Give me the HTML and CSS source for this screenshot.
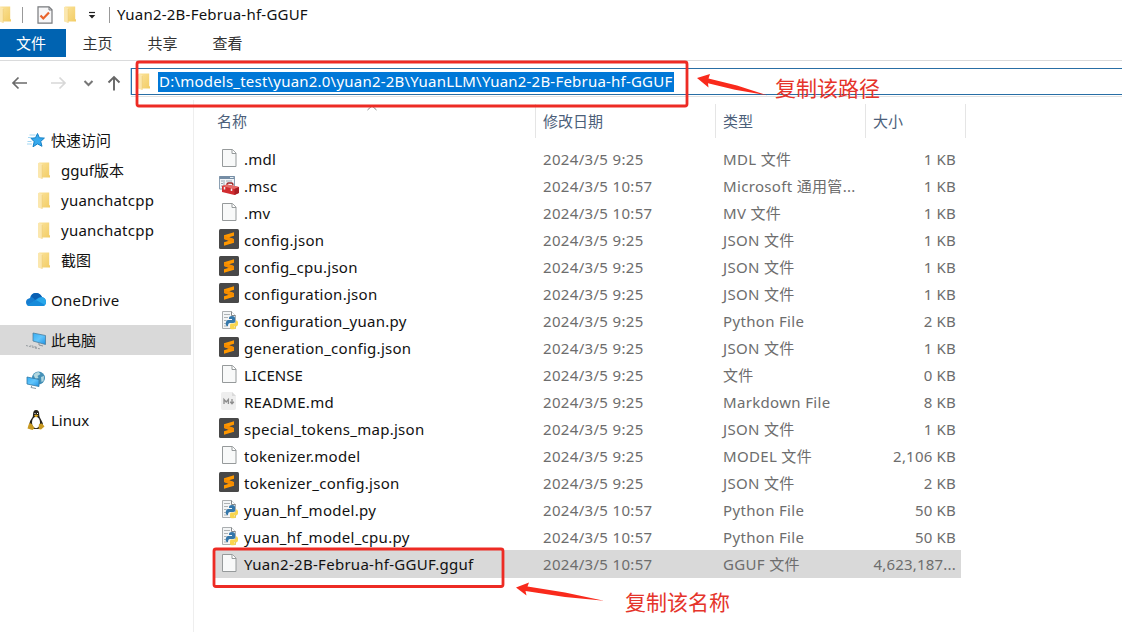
FILE: index.html
```html
<!DOCTYPE html>
<html lang="zh-CN">
<head>
<meta charset="utf-8">
<title>Yuan2-2B-Februa-hf-GGUF</title>
<link rel="stylesheet" href="styles.css">
</head>
<body>
<svg class="defs" width="0" height="0">
  <defs>
    <linearGradient id="gold" x1="0" y1="0" x2="1" y2="1"><stop offset="0" stop-color="#fbe39b"/><stop offset="1" stop-color="#f2cc64"/></linearGradient>
    <linearGradient id="screen" x1="0" y1="0" x2="1" y2="1"><stop offset="0" stop-color="#35aef5"/><stop offset=".5" stop-color="#62c5fb"/><stop offset="1" stop-color="#1d91e4"/></linearGradient>
    <symbol id="folder" viewBox="0 0 12 17"><path d="M1 .5h10.2v12.8h.8v2.2H4z" fill="url(#gold)"/><path d="M0 .8 4.2 2v15L0 15.5z" fill="#fbe7ae"/><path d="M4.2 3v14" stroke="#e9c566" stroke-width=".5"/></symbol>
    <symbol id="page" viewBox="0 0 20 20"><path d="M3.500 1.500h10l3.500 3.500v13.500H3.500z" fill="#f8f9f9" stroke="#969a9b"/><path d="M13 1.500v4h4" fill="#fff" stroke="#969a9b"/></symbol>
    <symbol id="sublime" viewBox="0 0 20 20"><rect width="20" height="20" rx="1.500" fill="#484848"/><path d="M5 6.200 15 3.200v3.500L10 8.300 15 10v3.700L5 16.700v-3.500l5-1.500L5 10z" fill="#ff9800"/><path d="M5 6.500v3.500l10 3.700v-3.500z" fill="#f58c00"/></symbol>
    <symbol id="python" viewBox="0 0 20 20"><path d="M3.500 1.500h9l4 4v13h-13z" fill="#f3f5f6" stroke="#aaaeb0"/><path d="M12.500 1.500v4h4" fill="#fff" stroke="#85898b"/><path d="M5 4.500h6M5 7.500h4M5 10.500h2.500M5 13.500h2M5 16h4" stroke="#9ca2a5" stroke-width=".8"/><path d="M10 8q0-2 3-2t3 2v4q0 1-2 1h-3q-2 0-2 3H8q-2-1-1-4 .5-2 2-2h4V9h-3z" fill="#3477aa"/><path d="M12 13.500h3q2 0 2-3h1q1.500 1 1 4-.5 2-2 2h-2v.7h2v1q0 1-3 1t-3-1.500v-2q0-2.200 1-2.200z" fill="#f9d64e"/></symbol>
    <symbol id="markdown" viewBox="0 0 20 20"><path d="M4 1h9l4 4v12q0 2-2 2H4q-2 0-2-2V3q0-2 2-2z" fill="#eee"/><path d="M13 1v4h4z" fill="#dadada"/><path d="M5 13V8.500l2.200 2.500 2.200-2.500V13M13 8v4M11.200 10.800 13 12.800l1.800-2" fill="none" stroke="#8d8d8d" stroke-width="1.300"/></symbol>
    <symbol id="toolbox" viewBox="0 0 20 20"><path d="M.5 1.500h15V14H.5z" fill="#f2f5f8" stroke="#8ca0b2"/><path d="M.500 1h15v3H.5z" fill="#758da5"/><path d="M11 2.500h3.500" stroke="#e8f0f5"/><path d="M5 5v8M2 6h2M2 8.500h2M2 11h2M7 6h6" stroke="#8795a2" stroke-width=".8"/><path d="M8 11V9q0-1 1.500-1h3q1.500 0 1.500 2.500" fill="none" stroke="#972323" stroke-width="1.300"/><path d="m3 11 5-1.500 12 2.500-.5 6-4 2L3 17z" fill="#d12c30"/><path d="m3 11 5-1.500 12 2.500-4.500 2z" fill="#e66c69"/><path d="m15.500 14 4.500-2v6l-4.500 2z" fill="#a91e24"/><path d="M5.500 12v2.500M12.500 13.500V16" stroke="#eee" stroke-width="1.500"/></symbol>
  </defs>
</svg>
<div class="window">
  <header class="titlebar">
    <svg class="fold first"><use href="#folder"/></svg><i class="bar"></i>
    <svg class="check" viewBox="0 0 16 18"><path d="M1 .8h11l3 3v13.400H1z" fill="#f7f7f8" stroke="#77797c" stroke-width="1.200"/><path d="M12 1v3h3" fill="none" stroke="#77797c"/><path d="m3.500 9.500 2.800 3L12 6.500" fill="none" stroke="#e9642c" stroke-width="2.200"/></svg>
    <svg class="fold"><use href="#folder"/></svg>
    <svg class="customize" viewBox="0 0 8 8"><path d="M1 1.500h6" stroke="#222" stroke-width="1.200"/><path d="M.7 4h6.600L4 7.500z" fill="#222"/></svg>
    <i class="bar last"></i><span class="title">Yuan2-2B-Februa-hf-GGUF</span>
  </header>
  <nav class="tabs"><span class="tab active">文件</span><span class="tab">主页</span><span class="tab">共享</span><span class="tab">查看</span></nav>
  <div class="address-row">
    <svg class="nav-icons" width="131" height="39" viewBox="0 0 131 39" fill="none" stroke-width="1.700">
      <path d="M27 22H13M18.500 16.500 13 22l5.500 5.500" stroke="#6b6b6b"/><path d="M51 22h14M59.500 16.500 65 22l-5.500 5.500" stroke="#d8d8d8"/><path d="m84.500 20 4 4 4-4" stroke="#777" stroke-width="2"/><path d="M114 29.500V16M108.500 21.500 114 16l5.500 5.500" stroke="#666" stroke-width="1.900"/>
    </svg>
    <div class="address"><svg class="fold"><use href="#folder"/></svg><span class="path">D:\models_test\yuan2.0\yuan2-2B\YuanLLM\Yuan2-2B-Februa-hf-GGUF</span></div>
  </div>
  <div class="content">
    <aside class="sidebar">
      <div class="side cjk"><svg class="side-icon" viewBox="0 0 20 20"><path d="m11.500 3.500 1.900 4.300 5 .3-3.700 3.300 1.300 4.900-4.500-2.400-4.500 2.900 1.200-5.100L5 8.300l4.500-.5z" fill="#36a9ed" stroke="#1681c6"/><path d="M3.500 5h6M2 7.500h4.500M1.500 11.500h4M1 14h5" stroke="#8bcdf0" stroke-width=".8"/></svg><span>快速访问</span></div>
      <div class="side child cjk"><svg class="fold"><use href="#folder"/></svg><span>gguf版本</span></div>
      <div class="side child"><svg class="fold"><use href="#folder"/></svg><span>yuanchatcpp</span></div>
      <div class="side child"><svg class="fold"><use href="#folder"/></svg><span>yuanchatcpp</span></div>
      <div class="side child cjk"><svg class="fold"><use href="#folder"/></svg><span>截图</span></div>
      <div class="side group"><svg class="side-icon" viewBox="0 0 20 20"><path d="M4 16q-4 0-4-4 0-3 4-4 1-5 6-5 4 0 6 4 4 1 4 5 0 4-4 4z" fill="#167dd0"/><path d="M5 7q1-4 5-4 4 0 6 4-4 0-7 3Q7 7 5 7z" fill="#0b60b2"/><path d="M2 15q4-2 8-5 3-3 6-3 4 1 4 5 0 4-4 4H4z" fill="#29a7ea"/><path d="m10 10 9 5q-1 1-3 1H4q-2 0-3-1z" fill="#168bda"/></svg><span>OneDrive</span></div>
      <div class="side group selected cjk"><svg class="side-icon" viewBox="0 0 20 20"><path d="m7 3 12.500 2.500v9L7 11z" fill="url(#screen)" stroke="#4b7d9e" stroke-width=".8"/><path d="m13 13 0 2 4 1" stroke="#8b9299" fill="none"/><path d="m0 15.500 9 2.300 2-.5-7-2M9 18l5 .8" stroke="#979da1" stroke-dasharray="2 1" fill="none"/></svg><span>此电脑</span></div>
      <div class="side group cjk"><svg class="side-icon" viewBox="0 0 20 20"><circle cx="12.500" cy="8" r="6.500" fill="#438fb6"/><path d="M7.500 5q2-3 5-3l2 2-3 2 1 2-3 1zM15 7l3-1-.5 5-2 1z" fill="#b2d7df"/><path d="m1 7 12 2.500v7L1 14z" fill="url(#screen)" stroke="#3179a4" stroke-width=".8"/><path d="m6 15.500-1 2 5 1" stroke="#879aa6" fill="none"/></svg><span>网络</span></div>
      <div class="side group"><svg class="side-icon" viewBox="0 0 20 20"><path d="M7 5q0-5 3-5 3.500 0 3.200 5 0 2 2 5 2 3 2 6l-3 3H7l-4-4q1-5 3-7 1-1 1-3z" fill="#25221c"/><ellipse cx="10" cy="12.500" rx="4" ry="5.800" fill="#fff"/><path d="M8 5.500 10 4.500l2.500 1-2.500 2z" fill="#dca91f"/><path d="M9 3v1M11.500 3v1" stroke="#fff"/><path d="m3.500 13 2 .7 3 4.300-2 2-5-1.500L2.500 15zM16 13.500l2.500 3-3.500 3-2.500-.5.500-5z" fill="#c99a22"/></svg><span class="plain">Linux</span></div>
    </aside>
    <main class="files">
      <div class="columns"><span class="sorted">名称<svg viewBox="0 0 10 6"><path d="M.5 5 5 .8 9.500 5" fill="none" stroke="#777" stroke-width=".9"/></svg></span><span>修改日期</span><span>类型</span><span>大小</span></div>
      <div class="row"><span class="name"><svg><use href="#page"/></svg>.mdl</span><span>2024/3/5 9:25</span><span>MDL 文件</span><span class="size">1 KB</span></div>
      <div class="row"><span class="name"><svg><use href="#toolbox"/></svg>.msc</span><span>2024/3/5 10:57</span><span>Microsoft 通用管...</span><span class="size">1 KB</span></div>
      <div class="row"><span class="name"><svg><use href="#page"/></svg>.mv</span><span>2024/3/5 10:57</span><span>MV 文件</span><span class="size">1 KB</span></div>
      <div class="row"><span class="name"><svg><use href="#sublime"/></svg>config.json</span><span>2024/3/5 9:25</span><span>JSON 文件</span><span class="size">1 KB</span></div>
      <div class="row"><span class="name"><svg><use href="#sublime"/></svg>config_cpu.json</span><span>2024/3/5 9:25</span><span>JSON 文件</span><span class="size">1 KB</span></div>
      <div class="row"><span class="name"><svg><use href="#sublime"/></svg>configuration.json</span><span>2024/3/5 9:25</span><span>JSON 文件</span><span class="size">1 KB</span></div>
      <div class="row"><span class="name"><svg><use href="#python"/></svg>configuration_yuan.py</span><span>2024/3/5 9:25</span><span>Python File</span><span class="size">2 KB</span></div>
      <div class="row"><span class="name"><svg><use href="#sublime"/></svg>generation_config.json</span><span>2024/3/5 9:25</span><span>JSON 文件</span><span class="size">1 KB</span></div>
      <div class="row"><span class="name plain"><svg><use href="#page"/></svg>LICENSE</span><span>2024/3/5 9:25</span><span>文件</span><span class="size">0 KB</span></div>
      <div class="row"><span class="name"><svg><use href="#markdown"/></svg>README.md</span><span>2024/3/5 9:25</span><span>Markdown File</span><span class="size">8 KB</span></div>
      <div class="row"><span class="name"><svg><use href="#sublime"/></svg>special_tokens_map.json</span><span>2024/3/5 9:25</span><span>JSON 文件</span><span class="size">1 KB</span></div>
      <div class="row"><span class="name"><svg><use href="#page"/></svg>tokenizer.model</span><span>2024/3/5 9:25</span><span>MODEL 文件</span><span class="size">2,106 KB</span></div>
      <div class="row"><span class="name"><svg><use href="#sublime"/></svg>tokenizer_config.json</span><span>2024/3/5 9:25</span><span>JSON 文件</span><span class="size">2 KB</span></div>
      <div class="row"><span class="name"><svg><use href="#python"/></svg>yuan_hf_model.py</span><span>2024/3/5 10:57</span><span>Python File</span><span class="size">50 KB</span></div>
      <div class="row"><span class="name"><svg><use href="#python"/></svg>yuan_hf_model_cpu.py</span><span>2024/3/5 10:57</span><span>Python File</span><span class="size">50 KB</span></div>
      <div class="row selected"><span class="name"><svg><use href="#page"/></svg>Yuan2-2B-Februa-hf-GGUF.gguf</span><span>2024/3/5 10:57</span><span>GGUF 文件</span><span class="size">4,623,187...</span></div>
    </main>
  </div>
  <svg class="marks" viewBox="0 0 1122 632"><g fill="none" stroke="#ed2b24" stroke-width="2.800"><rect x="137" y="62" width="550" height="44" rx="2"/><rect x="214" y="549" width="289" height="37.500" rx="2"/></g><g fill="#f92a1c"><path d="m697 78 13-4-1.500 4.500L737 85.500l30 9.700-32-5.500-27-6.500.5 4.300z"/><path d="m516 587.500 13-5-1.500 4L565 592.500l39 8.200-39-3.700-39.500-6 1 4.500z"/></g></svg>
  <span class="note path-note">复制该路径</span><span class="note name-note">复制该名称</span>
</div>
</body>
</html>
```
FILE: styles.css
```css
* { box-sizing: border-box; }
body { margin: 0; background: #fff; font-family: "Noto Sans", "Noto Sans CJK SC", sans-serif; font-size: 15px; color: #111; }
.defs { position: absolute; }
.window { position: relative; width: 1122px; height: 632px; overflow: hidden; white-space: nowrap; }
.fold { width: 12px; height: 17px; flex: none; }
.titlebar { height: 29px; display: flex; align-items: center; }
.titlebar .fold { margin-left: 11px; }
.titlebar .fold.first { margin-left: -1px; }
.bar { width: 1px; height: 16px; background: #999; margin-left: 11px; }
.check { width: 16px; height: 18px; margin-left: 14px; }
.customize { width: 8px; height: 8px; margin-left: 12px; }
.bar.last { margin-left: 13px; }
.title { margin-left: 7px; padding-bottom: 2px; letter-spacing: .23px; }
.tabs { height: 32px; display: flex; align-items: flex-start; border-bottom: 1px solid #dadbdc; color: #333; }
.tab { height: 28px; width: 65px; line-height: 29px; text-align: center; padding-right: 2px; }
.tab.active { width: 66px; padding-right: 4px; background: #0063b1; color: #fff; }
.address-row { height: 39px; display: flex; }
.nav-icons { flex: none; }
.address { flex: none; width: 1000px; height: 27px; margin-top: 7px; border: 1px solid #286ea5; box-shadow: 0 1px 0 #fff, 0 2px 0 #e1e1e1, -1px 0 #b4def2; display: flex; align-items: center; padding-left: 6px; }
.address .fold { margin-right: 8px; }
.path { width: 516px; height: 20px; line-height: 18px; background: #0078d7; color: #fff; padding-left: 1px; letter-spacing: .215px; }
.content { display: flex; height: 532px; }
.sidebar { width: 194px; border-right: 1px solid #eee; padding-top: 25px; }
.side { height: 30px; width: 191px; display: flex; align-items: center; padding-left: 26px; letter-spacing: .23px; }
.side.cjk { letter-spacing: 0; }
.cjk span { padding-bottom: 2px; }
.side-icon { width: 20px; height: 20px; margin-right: 5px; }
.child { padding-left: 38px; }
.child .fold { margin-right: 11px; }
.group { margin-top: 10px; }
.side.selected { background: #d9d9d9; }
.files { width: 772px; padding: 4px 0 0 19px; }
.columns, .row { display: grid; grid-template-columns: 323px 180px 150px 100px; }
.columns { height: 33px; width: 753px; margin-bottom: 8px; color: #4c607a; line-height: 34px; }
.columns span { padding-left: 7px; border-right: 1px solid #e5e5e5; }
.columns .sorted { position: relative; padding-left: 4px; }
.sorted svg { position: absolute; left: 154px; top: 1px; width: 10px; height: 6px; }
.row { height: 27px; width: 748px; line-height: 28px; color: #6d6d6d; letter-spacing: .33px; }
.row > span { padding-left: 7px; }
.row .name { padding-left: 6px; display: flex; color: #111; letter-spacing: .28px; }
.row .name.plain, .side .plain { letter-spacing: 0; }
.name svg { width: 20px; height: 20px; margin: 3px 5px 0 0; }
.row .size { text-align: right; padding-right: 10px; letter-spacing: .2px; }
.row.selected { height: 28px; background: #d9d9d9; }
.marks { position: absolute; left: 0; top: 0; width: 1122px; height: 632px; }
.note { position: absolute; font-size: 21px; line-height: 30px; color: #e5342b; }
.path-note { left: 775px; top: 73px; }
.name-note { left: 625px; top: 587px; }
```
